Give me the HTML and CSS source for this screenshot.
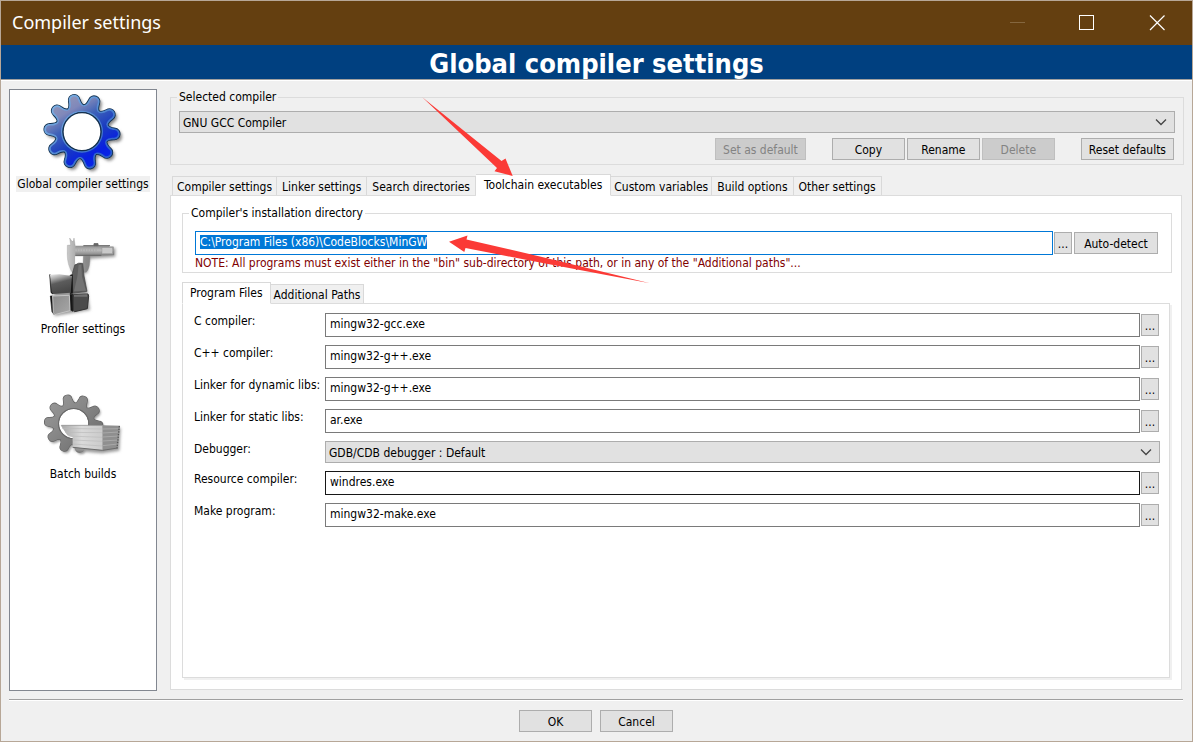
FILE: index.html
```html
<!DOCTYPE html>
<html lang="en">
<head>
<meta charset="utf-8">
<title>Compiler settings</title>
<link rel="stylesheet" href="styles.css">
</head>
<body>
<div class="window">
  <header class="titlebar">
    <span class="titlebar-text">Compiler settings</span>
    <div class="window-controls">
      <button class="window-button" disabled aria-label="Minimize"><svg width="16" height="16" viewBox="0 0 16 16"><path d="M1 7.5H16" stroke="#85673f"/></svg></button>
      <button class="window-button" aria-label="Maximize"><svg width="16" height="16" viewBox="0 0 16 16"><rect x=".5" y=".5" width="14" height="14" fill="none" stroke="#fff"/></svg></button>
      <button class="window-button" aria-label="Close"><svg width="16" height="16" viewBox="0 0 16 16"><path d="M1 .5l14.500 14.500M15.500.5l-14.500 14.500" stroke="#fff" stroke-width="1.2"/></svg></button>
    </div>
  </header>
  <h1 class="banner">Global compiler settings</h1>

  <div class="content">
    <nav class="sidebar" aria-label="Categories">
      <button class="category category-selected">
        <svg class="category-icon" viewBox="117 33 258 252" aria-hidden="true">
          <defs>
            <path id="tooth" d="M0 2L-25 -75C-19 -79 -17 -88 -16.500 -97C-16 -119 16 -119 16.500 -97C17 -88 19 -79 25 -75Z"/>
            <path id="slim-tooth" d="M0 2L-25 -71C-15 -75 -12 -86 -11.500 -97C-11 -112 11 -112 11.500 -97C12 -86 15 -75 25 -71Z"/>
            <g id="gear">
              <use href="#tooth"/><use href="#tooth" transform="rotate(36)"/><use href="#tooth" transform="rotate(72)"/><use href="#tooth" transform="rotate(108)"/><use href="#tooth" transform="rotate(144)"/><use href="#tooth" transform="rotate(180)"/><use href="#tooth" transform="rotate(216)"/><use href="#tooth" transform="rotate(252)"/><use href="#tooth" transform="rotate(288)"/><use href="#tooth" transform="rotate(324)"/><circle r="74"/>
            </g>
            <g id="slim-gear">
              <use href="#slim-tooth"/><use href="#slim-tooth" transform="rotate(36)"/><use href="#slim-tooth" transform="rotate(72)"/><use href="#slim-tooth" transform="rotate(108)"/><use href="#slim-tooth" transform="rotate(144)"/><use href="#slim-tooth" transform="rotate(180)"/><use href="#slim-tooth" transform="rotate(216)"/><use href="#slim-tooth" transform="rotate(252)"/><use href="#slim-tooth" transform="rotate(288)"/><use href="#slim-tooth" transform="rotate(324)"/><circle r="71"/>
            </g>
            <mask id="ring" maskUnits="userSpaceOnUse" x="-140" y="-140" width="280" height="280"><rect x="-140" y="-140" width="280" height="280" fill="#fff"/><circle r="57" fill="#000"/></mask>
            <mask id="face" maskUnits="userSpaceOnUse" x="-140" y="-140" width="280" height="280"><use href="#gear" fill="#fff" transform="rotate(-14)"/><circle r="58" fill="#000"/></mask>
            <mask id="inner-face" maskUnits="userSpaceOnUse" x="-140" y="-140" width="280" height="280"><use href="#slim-gear" fill="#fff" transform="rotate(-14)"/><circle r="63" fill="#000"/></mask>
            <linearGradient id="blue" x1=".15" y1="0" x2=".75" y2="1"><stop offset="0" stop-color="#9a9db8"/><stop offset=".25" stop-color="#8088ba"/><stop offset=".4" stop-color="#3f62b8"/><stop offset=".6" stop-color="#1a3cc0"/><stop offset=".8" stop-color="#0820e0"/><stop offset="1" stop-color="#0828f0"/></linearGradient>
            <linearGradient id="rim" x1="0" y1="0" x2="1" y2="1"><stop offset="0" stop-color="#8fc0ea"/><stop offset=".5" stop-color="#4f86d0"/><stop offset="1" stop-color="#1848c8"/></linearGradient>
            <linearGradient id="steel" x1="0" y1="0" x2="1" y2="1"><stop offset="0" stop-color="#9c9c9c"/><stop offset=".45" stop-color="#868686"/><stop offset="1" stop-color="#666"/></linearGradient>
            <filter id="soft" x="-20%" y="-20%" width="150%" height="150%"><feGaussianBlur stdDeviation="4"/></filter>
          </defs>
          <g transform="translate(246 155)">
            <g mask="url(#ring)">
              <g transform="translate(7 8) rotate(-14)"><use href="#gear" fill="#888" filter="url(#soft)"/></g>
              <use href="#gear" transform="rotate(-14)" fill="#123" stroke="#12304f" stroke-width="5"/>
            </g>
            <g mask="url(#face)"><rect x="-115" y="-115" width="230" height="230" fill="url(#rim)"/></g>
            <g mask="url(#inner-face)"><rect x="-115" y="-115" width="230" height="230" fill="url(#blue)"/></g>
            <circle r="57" fill="none" stroke="#14304f" stroke-width="4"/>
          </g>
        </svg>
        <span class="category-label">Global compiler settings</span>
      </button>
      <button class="category">
        <svg class="category-icon" viewBox="117 48 258 252" aria-hidden="true">
          <defs>
            <linearGradient id="cubeA" x1="0" y1="0" x2=".3" y2="1"><stop offset="0" stop-color="#eee"/><stop offset=".25" stop-color="#aaa"/><stop offset=".5" stop-color="#5c5c5c"/><stop offset="1" stop-color="#484848"/></linearGradient>
            <linearGradient id="cubeB" x1="0" y1="0" x2="1" y2="1"><stop offset="0" stop-color="#8a8a8a"/><stop offset="1" stop-color="#a8a8a8"/></linearGradient>
            <linearGradient id="jaw" x1="0" y1="0" x2="1" y2="0"><stop offset="0" stop-color="#c9c9c9"/><stop offset=".4" stop-color="#8a8a8a"/><stop offset="1" stop-color="#747474"/></linearGradient>
            <linearGradient id="beam" x1="0" y1="0" x2="0" y2="1"><stop offset="0" stop-color="#8e8e8e"/><stop offset=".5" stop-color="#bbb"/><stop offset="1" stop-color="#8a8a8a"/></linearGradient>
          </defs>
          <path d="M158 172L222 172L246 136L262 214L270 270L164 288ZM212 90L346 84L346 110L270 116L262 160L215 156Z" fill="#999" filter="url(#soft)"/>
          <path d="M223 107H251V132H223Z" fill="#fff"/>
          <path d="M209 54L216 64L220 64L222 54L226 80L340 80L342 105L270 108C270 130 268 150 258 157L248 157L250 108L224 108L224 148L218 158C206 142 201 122 202 96L202 76L212 75Z" fill="url(#jaw)" stroke="#8b8b8b"/>
          <path d="M226 77H328V81H340V104H226Z" fill="url(#beam)"/>
          <path d="M250 77H330M282 71h12v6h-12zM226 106H304" fill="#666" stroke="#666" stroke-width="3"/>
          <path d="M232 85V95M240 85V95M248 85V95M256 85V95M264 85V95M272 85V95M280 85V95M288 85V95" stroke="#aaa" stroke-width="3"/>
          <rect x="306" y="83" width="31" height="18" fill="#c9c9c9" stroke="#888"/>
          <path d="M224 136Q236 126 248 130L252 168L261 214L216 220L216 164Z" fill="#5e5e5e" stroke="#444" stroke-width="2"/>
          <path d="M236 134L232 170L222 214L258 212L246 170L244 134Z" fill="#737373"/>
          <path d="M149 164L157 168L159 222L153 218ZM210 166L217 164L218 218L211 222ZM151 228L158 228L163 284L156 276ZM210 224L218 222L219 274L211 270Z" fill="#161616" stroke="#161616" stroke-width="2"/>
          <path d="M150 164L178 163L216 168L212 218L160 222L155 216Z" fill="url(#cubeA)"/>
          <path d="M158 228L208 226L210 272L164 284L160 278Z" fill="url(#cubeB)" stroke="#c4c4c4" stroke-width="3"/>
          <path d="M220 224L264 222L266 228L262 266L224 275L220 272Z" fill="#4b4b4b" stroke="#343434" stroke-width="3"/>
          <path d="M222 224L262 223L262 230L222 230Z" fill="#717171"/>
        </svg>
        <span class="category-label">Profiler settings</span>
      </button>
      <button class="category">
        <svg class="category-icon" viewBox="117 3 258 252" aria-hidden="true">
          <defs>
            <linearGradient id="paper" x1="0" y1="0" x2="1" y2="0"><stop offset="0" stop-color="#a6a6a6"/><stop offset=".5" stop-color="#dadada"/><stop offset="1" stop-color="#cacaca"/></linearGradient>
          </defs>
          <g transform="translate(221 131) scale(.77)">
            <g mask="url(#ring)">
              <g transform="translate(6 8) rotate(-14)"><use href="#gear" fill="#999" filter="url(#soft)"/></g>
              <use href="#gear" transform="rotate(-14)" fill="#666" stroke="#666" stroke-width="5"/>
            </g>
            <g mask="url(#face)"><rect x="-112" y="-112" width="224" height="224" fill="url(#steel)"/></g>
            <circle r="59" fill="none" stroke="#686868" stroke-width="4"/>
          </g>
          <path d="M230 144H362L358 212L306 220L222 212Z" fill="#999" filter="url(#soft)"/>
          <path d="M182 136H308V211L218 202V172L202 166Z" fill="url(#paper)"/>
          <path d="M184 136H306" stroke="#888" stroke-width="2"/>
          <path d="M186 145L308 147M195 157L308 158M205 168L308 172M218 180L308 184M218 192L308 198" stroke="#bbb" stroke-width="2"/>
          <path d="M308 136L360 137L353 204L308 211Z" fill="#8f8f8f"/>
          <path d="M308 147L358 146M308 159L357 156M308 171L356 168M308 183L355 180M308 197L354 192" stroke="#a8a8a8" stroke-width="3"/>
          <path d="M358 138L351 205" stroke="#555" stroke-width="4" stroke-dasharray="4 4"/>
          <path d="M218 202L308 211L353 204" fill="none" stroke="#6b6b6b" stroke-width="3"/>
        </svg>
        <span class="category-label">Batch builds</span>
      </button>
    </nav>

    <main class="settings">
      <fieldset class="group compiler-group">
        <legend>Selected compiler</legend>
        <div class="dropdown">
          <select class="select" aria-label="Selected compiler"><option>GNU GCC Compiler</option></select>
          <svg class="chevron" width="12" height="8" viewBox="0 0 12 8"><path d="M1 1.500L6 6.500L11 1.500" fill="none" stroke="#444" stroke-width="1.300"/></svg>
        </div>
        <div class="compiler-actions">
          <button class="button button-wide" disabled>Set as default</button>
          <div class="button-trio">
            <button class="button">Copy</button>
            <button class="button">Rename</button>
            <button class="button" disabled>Delete</button>
          </div>
          <button class="button button-wide">Reset defaults</button>
        </div>
      </fieldset>

      <div class="tabs main-tabs" role="tablist">
        <button class="tab" role="tab">Compiler settings</button>
        <button class="tab" role="tab">Linker settings</button>
        <button class="tab" role="tab">Search directories</button>
        <button class="tab tab-selected" role="tab" aria-selected="true">Toolchain executables</button>
        <button class="tab" role="tab">Custom variables</button>
        <button class="tab" role="tab">Build options</button>
        <button class="tab" role="tab">Other settings</button>
      </div>

      <section class="panel toolchain" role="tabpanel">
        <fieldset class="group directory-group">
          <legend>Compiler's installation directory</legend>
          <div class="directory-row">
            <input class="field field-focused" id="directory" type="text" aria-label="Compiler's installation directory" value="C:\Program Files (x86)\CodeBlocks\MinGW">
            <button class="button browse" aria-label="Browse">...</button>
            <button class="button detect">Auto-detect</button>
          </div>
          <p class="note">NOTE: All programs must exist either in the "bin" sub-directory of this path, or in any of the "Additional paths"...</p>
        </fieldset>

        <div class="tabs inner-tabs" role="tablist">
          <button class="tab tab-selected" role="tab" aria-selected="true">Program Files</button>
          <button class="tab" role="tab">Additional Paths</button>
        </div>

        <div class="panel programs" role="tabpanel">
          <div class="program"><label for="cc">C compiler:</label><input class="field" id="cc" type="text" value="mingw32-gcc.exe"><button class="button browse">...</button></div>
          <div class="program"><label for="cpp">C++ compiler:</label><input class="field" id="cpp" type="text" value="mingw32-g++.exe"><button class="button browse">...</button></div>
          <div class="program"><label for="dyn">Linker for dynamic libs:</label><input class="field" id="dyn" type="text" value="mingw32-g++.exe"><button class="button browse">...</button></div>
          <div class="program"><label for="stat">Linker for static libs:</label><input class="field" id="stat" type="text" value="ar.exe"><button class="button browse">...</button></div>
          <div class="program"><label for="dbg">Debugger:</label>
            <div class="dropdown">
              <select class="select" id="dbg"><option>GDB/CDB debugger : Default</option></select>
              <svg class="chevron" width="12" height="8" viewBox="0 0 12 8"><path d="M1 1.500L6 6.500L11 1.500" fill="none" stroke="#444" stroke-width="1.300"/></svg>
            </div>
          </div>
          <div class="program"><label for="res">Resource compiler:</label><input class="field field-hot" id="res" type="text" value="windres.exe"><button class="button browse">...</button></div>
          <div class="program"><label for="make">Make program:</label><input class="field" id="make" type="text" value="mingw32-make.exe"><button class="button browse">...</button></div>
        </div>
      </section>
    </main>
  </div>

  <footer class="footer">
    <button class="button">OK</button>
    <button class="button">Cancel</button>
  </footer>

  <svg class="arrows" width="240" height="200" viewBox="420 90 240 200" aria-hidden="true">
    <path d="M422.300 97.300L501.500 161L505.500 158.500L512.700 176L494.500 171.300L497 168Z" fill="#fb3a36"/>
    <path d="M449 241.700L467.500 235.500L466.500 239.500L540 256.500L650 283.200L540 262.500L465.500 248L464.300 252Z" fill="#fb3a36"/>
  </svg>
</div>
<script src="focus.js"></script>
</body>
</html>
```
FILE: styles.css
```css
* { box-sizing: border-box; }

body {
  margin: 0;
  font: 12px/16px "DejaVu Sans Condensed", "DejaVu Sans", sans-serif;
  color: #000;
}

button, input, select { font: inherit; color: inherit; margin: 0; }

.window {
  position: relative;
  display: flex;
  flex-direction: column;
  min-height: 100vh;
  background: #f0f0f0;
  border: 1px solid #b7a797;
}

.titlebar {
  display: flex;
  align-items: center;
  justify-content: space-between;
  height: 44px;
  padding-left: 11px;
  background: #643f10;
  color: #fff;
}
.titlebar-text { font: 18px/24px "Noto Sans", sans-serif; padding-bottom: 2px; }
.window-controls { display: flex; height: 100%; }
.window-button {
  display: flex;
  align-items: center;
  justify-content: center;
  width: 70px;
  padding: 0;
  border: 0;
  background: none;
}

.banner {
  margin: 0;
  height: 36px;
  background: #004080;
  border-bottom: 1px solid #fff;
  box-shadow: inset 0 -1px #a0a0a0;
  color: #fff;
  font-size: 27px;
  line-height: 37px;
  text-align: center;
}

.content {
  flex: 1;
  display: flex;
  gap: 13px;
  padding: 8px;
}

.sidebar {
  flex: 0 0 148px;
  display: flex;
  flex-direction: column;
  gap: 42px;
  padding-top: 1px;
  background: #fff;
  border: 1px solid #828790;
}
.category {
  display: flex;
  flex-direction: column;
  align-items: center;
  padding: 0;
  border: 0;
  background: none;
}
.category-icon { width: 86px; height: 84px; margin-right: 2px; }
.category-label { padding: 0 1px; margin-top: 1px; margin-bottom: 2px; }
.category-selected .category-label { background: #f0f0f0; }

.settings {
  flex: 1;
  min-width: 0;
  display: flex;
  flex-direction: column;
  padding-top: 1px;
  padding-bottom: 1px;
}

.group { margin: 0; min-width: 0; border: 1px solid #dcdcdc; }
.group legend { padding: 0 2px; line-height: 14px; }
.compiler-group { padding: 7px 8px 4px; }
.compiler-group legend { margin-left: -2px; }

.dropdown { position: relative; flex: 1; display: flex; }
.select {
  flex: 1;
  height: 22px;
  padding: 1px 24px 0 3px;
  appearance: none;
  background: #e1e1e1;
  border: 1px solid #adadad;
  border-radius: 0;
}
.chevron { position: absolute; right: 8px; top: 7px; pointer-events: none; }

.compiler-actions {
  display: flex;
  justify-content: flex-end;
  gap: 26px;
  padding: 5px 1px 0 0;
}
.button-trio { display: flex; gap: 2px; }

.button {
  width: 73px;
  height: 22px;
  padding: 1px 0 0;
  background: #e1e1e1;
  border: 1px solid #adadad;
  white-space: nowrap;
}
.button:disabled { background: #ccc; border-color: #bfbfbf; color: #838383; }
.button-wide { width: auto; padding: 1px 7px 0; }
.browse { width: 18px; }
.detect { width: 84px; }

.tabs { display: flex; align-items: flex-end; height: 22px; margin-bottom: -1px; }
.main-tabs { margin-top: 9px; padding-left: 2px; }
.inner-tabs { margin-top: 9px; }
.tab {
  height: 20px;
  padding: 1px 5px 0;
  background: #f0f0f0;
  border: 1px solid #d9d9d9;
  border-left-width: 0;
  white-space: nowrap;
}
.tab:first-child { padding: 1px 4px 0; border-left-width: 1px; }
.tab-selected,
.tab-selected:first-child {
  position: relative;
  height: 22px;
  padding: 0 7px;
  background: #fff;
  border-bottom-color: #fff;
}
.main-tabs .tab-selected { padding: 0 8px; }
.tab-selected + .tab { padding: 1px 3px 0; }

.panel { background: #fff; border: 1px solid #dcdcdc; }
.toolchain {
  flex: 1;
  display: flex;
  flex-direction: column;
  margin-right: 2px;
  padding: 10px 9px 11px 11px;
}

.directory-group { padding: 11px 13px 1px 12px; }
.directory-group legend { margin-left: -6px; }
.directory-row { display: flex; align-items: center; gap: 1px; }
.detect { margin-left: 1px; }
.note { margin: 0; color: #800000; }

.field {
  flex: 1;
  min-width: 0;
  height: 24px;
  padding: 0 4px 2px;
  background: #fff;
  border: 1px solid #7a7a7a;
  outline: 0;
}
.field-focused { border-color: #0078d7; }
.field-hot { border-color: #171717; }
.field::selection { background: #0078d7; color: #fff; }

.programs {
  flex: 1;
  display: flex;
  flex-direction: column;
  gap: 8px;
  margin-right: 2px;
  padding: 9px 9px 9px 11px;
  box-shadow: 2px 2px #f0f0f0;
}
.program { display: flex; align-items: center; }
.program label { flex: 0 0 131px; align-self: flex-start; }
.program .browse { margin: 0 1px; line-height: 20px; }

.footer {
  display: flex;
  justify-content: center;
  gap: 8px;
  margin: 0 9px 0 8px;
  padding: 10px 0 9px;
  border-top: 1px solid #a0a0a0;
  box-shadow: inset 0 1px #fff;
}

.arrows { position: absolute; left: 419px; top: 89px; pointer-events: none; }
```
FILE: focus.js
```js
const directory = document.getElementById('directory');
directory.focus();
directory.select();
```
